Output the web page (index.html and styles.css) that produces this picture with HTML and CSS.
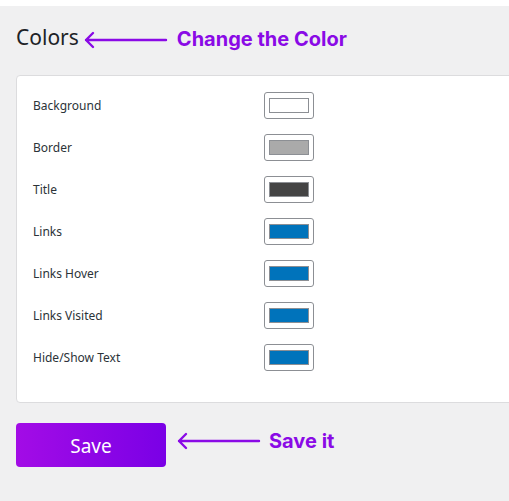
FILE: index.html
```html
<!DOCTYPE html>
<html>
<head>
<meta charset="utf-8">
<link rel="stylesheet" href="styles.css">
</head>
<body>
<div class="topbar"></div>
<main class="page">
  <div class="heading-row">
    <h2 class="title">Colors</h2>
    <svg class="arrow arrow-title" width="86" height="18" viewBox="0 0 86 18"><path d="M84 9H4M11 2L4 9L11 16" fill="none" stroke="#8a0ae6" stroke-width="2.4" stroke-linecap="round" stroke-linejoin="round"/></svg>
    <span class="note">Change the Color</span>
  </div>
  <section class="card">
    <div class="row"><span class="label">Background</span><button class="swatch"><span class="chip c-white"></span></button></div>
    <div class="row"><span class="label">Border</span><button class="swatch"><span class="chip c-gray"></span></button></div>
    <div class="row"><span class="label">Title</span><button class="swatch"><span class="chip c-dark"></span></button></div>
    <div class="row"><span class="label">Links</span><button class="swatch"><span class="chip c-blue"></span></button></div>
    <div class="row"><span class="label">Links Hover</span><button class="swatch"><span class="chip c-blue"></span></button></div>
    <div class="row"><span class="label">Links Visited</span><button class="swatch"><span class="chip c-blue"></span></button></div>
    <div class="row"><span class="label">Hide/Show Text</span><button class="swatch"><span class="chip c-blue"></span></button></div>
  </section>
  <div class="save-row">
    <button class="save">Save</button>
    <svg class="arrow arrow-save" width="86" height="18" viewBox="0 0 86 18"><path d="M84 9H4M11 2L4 9L11 16" fill="none" stroke="#8a0ae6" stroke-width="2.4" stroke-linecap="round" stroke-linejoin="round"/></svg>
    <span class="note">Save it</span>
  </div>
</main>
</body>
</html>
```

FILE: styles.css
```css
* { box-sizing: border-box; }
html, body { margin: 0; padding: 0; }
body {
  background: #f0f0f1;
  font-family: "Noto Sans", "Open Sans", sans-serif;
  color: #1d2327;
  width: 509px;
  height: 501px;
  overflow: hidden;
}
.topbar { height: 6px; background: #ffffff; }
.page { padding: 0 0 0 16px; }
.heading-row {
  display: flex;
  align-items: center;
  height: 58px;
  padding-top: 4px;
}
.title {
  margin: 0;
  font-size: 21px;
  font-weight: 400;
  color: #1d2327;
  line-height: 1;
}
.arrow { display: block; flex: none; }
.arrow-title { margin-left: 3px; margin-top: 5px; }
.note {
  font-family: "Inter", sans-serif;
  font-weight: 700;
  font-size: 20px;
  color: #8a0ae6;
  margin-left: 9px;
}
.heading-row .note { margin-top: 4px; }
.card {
  margin-top: 11px;
  width: 510px;
  background: #ffffff;
  border: 1px solid #dcdcde;
  border-radius: 4px;
  padding: 8px 0 24px 16px;
}
.row {
  display: flex;
  align-items: center;
  height: 42px;
}
.label {
  width: 231px;
  font-size: 12px;
  color: #2c3338;
}
.swatch {
  width: 50px;
  height: 27px;
  padding: 0;
  border: 1px solid #8c8f94;
  border-radius: 3px;
  background: #ffffff;
  display: flex;
  align-items: center;
  justify-content: center;
}
.chip {
  display: block;
  width: 40px;
  height: 15px;
  border: 1px solid #8c8f94;
}
.c-white { background: #ffffff; }
.c-gray { background: #aaaaaa; }
.c-dark { background: #444444; }
.c-blue { background: #0073bb; }
.save-row {
  display: flex;
  align-items: center;
  margin-top: 20px;
}
.save {
  width: 150px;
  height: 44px;
  border: none;
  border-radius: 4px;
  background: linear-gradient(90deg, #a30ce6 0%, #7a00e6 100%);
  color: #ffffff;
  font-family: "Noto Sans", "Open Sans", sans-serif;
  font-size: 19px;
  padding: 2px 0 0;
}
.arrow-save { margin-left: 9px; margin-top: -9px; }
.save-row .note { margin-left: 8px; margin-top: -8px; }
```
